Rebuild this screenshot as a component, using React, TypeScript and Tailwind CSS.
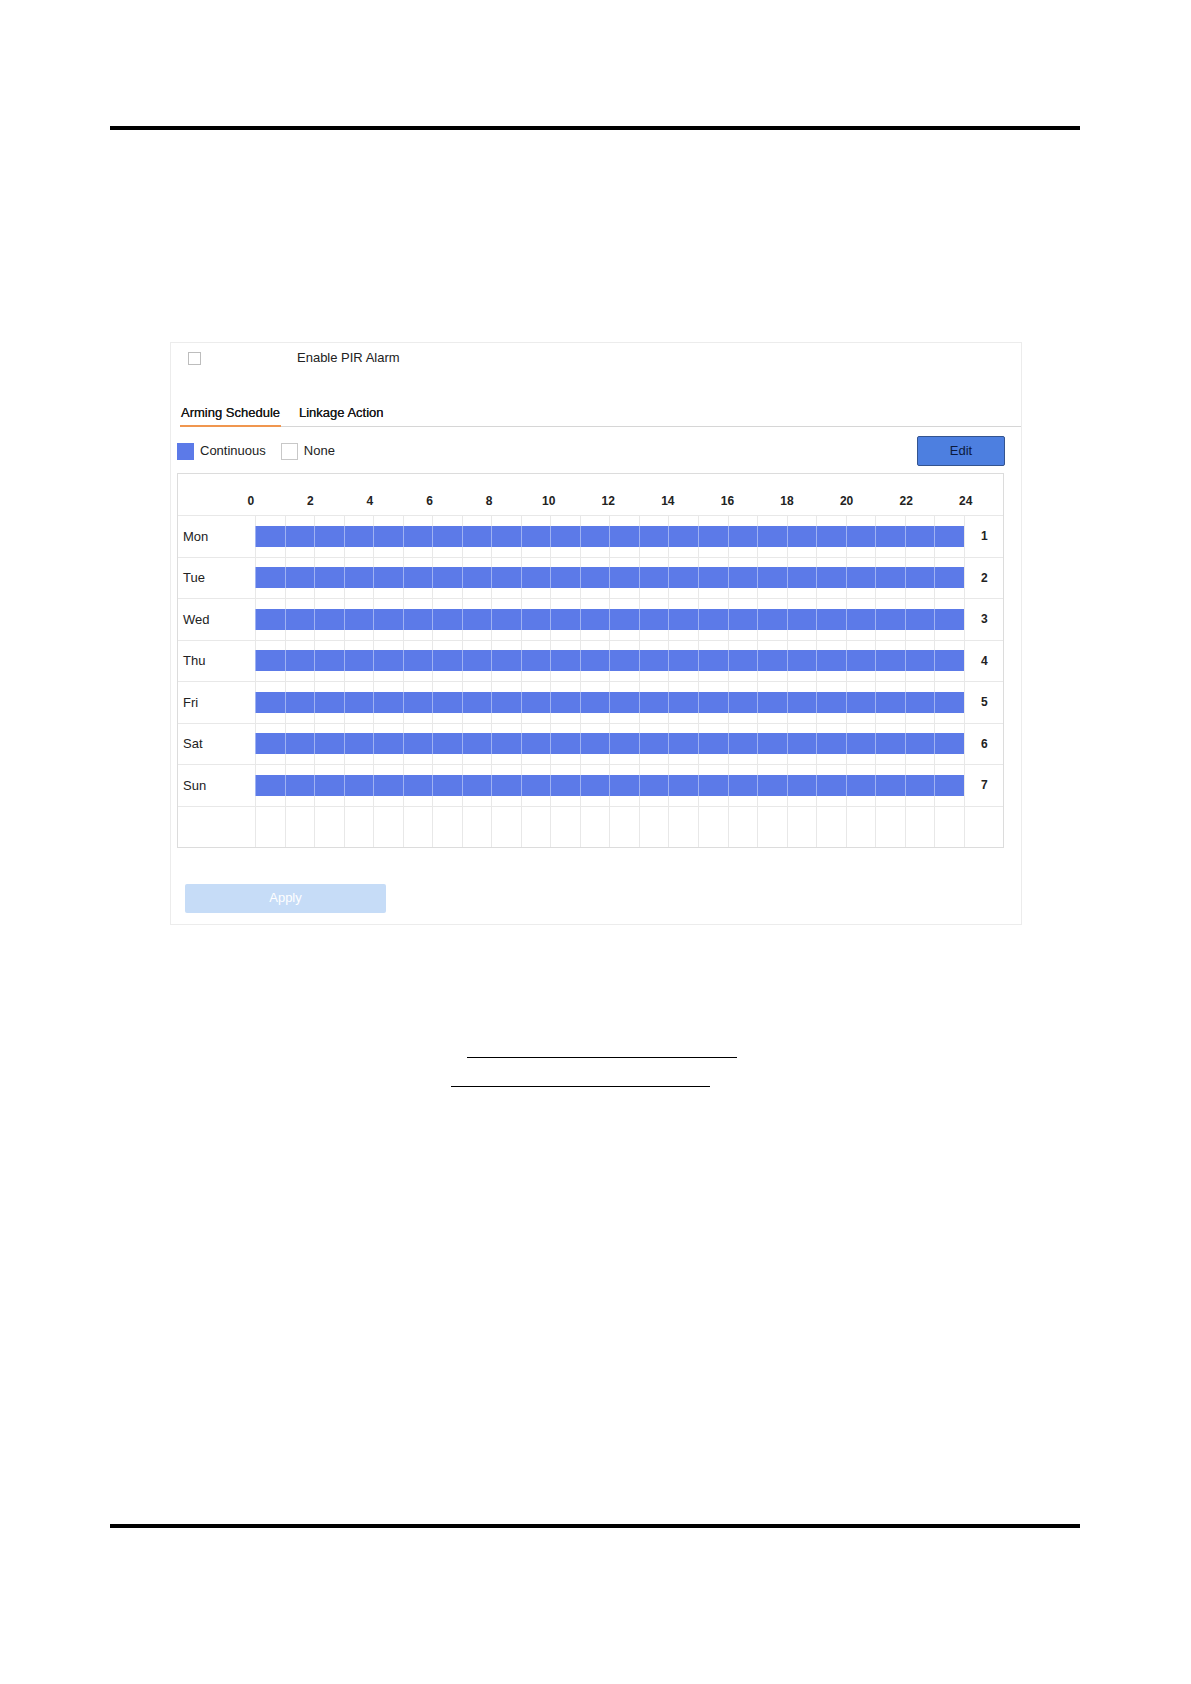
import React from "react";

const days = ["Mon", "Tue", "Wed", "Thu", "Fri", "Sat", "Sun"];
const hours = [0, 2, 4, 6, 8, 10, 12, 14, 16, 18, 20, 22, 24];
const cells = Array.from({ length: 24 }, (_, i) => i);

function DayRow({ label, n }: { label: string; n: number }) {
  return (
    <div className="grid grid-cols-[77px_repeat(24,29.54px)_40px] h-[41.5px] border-t border-[#e8e8e8]">
      <div className="flex items-center pl-[5px] text-[13px] text-[#222]">{label}</div>
      {cells.map((c) => (
        <div key={c} className="flex items-center border-l border-[#e8e8e8]">
          <div className="-ml-px h-[21px] w-[calc(100%+1px)] bg-[#5c7ae8] border-l border-[#9fb2f2]" />
        </div>
      ))}
      <div className="flex items-center justify-center border-l border-[#e8e8e8] text-[12px] font-bold text-[#222]">
        {n}
      </div>
    </div>
  );
}

export default function App() {
  return (
    <div
      className="w-[1191px] h-[1684px] bg-white pt-[126px]"
      style={{ fontFamily: '"Liberation Sans", Arial, sans-serif' }}
    >
      <div className="ml-[110px] w-[970px] h-[4px] bg-black" />

      <div className="ml-[170px] mt-[212px] w-[852px] border border-[#ececec] bg-white">
        {/* Enable row */}
        <div className="mt-[7px] h-[16px] flex items-center">
          <div className="ml-[17px] w-[13px] h-[13px] border border-[#bdbdbd] bg-white" />
          <span className="ml-[96px] text-[13px] text-[#222]">Enable PIR Alarm</span>
        </div>

        {/* Tabs */}
        <div className="mt-[39px] ml-[9px] flex border-b border-[#d6d6d6]">
          <div className="px-[1px] pb-[4px] border-b-2 border-[#f0964f] -mb-px">
            <span className="block leading-[16px] text-[13px] text-[#1a1a1a] [text-shadow:0_0_0.3px_#222]">
              Arming Schedule
            </span>
          </div>
          <div className="ml-[18px] pb-[5px]">
            <span className="block leading-[16px] text-[13px] text-[#1a1a1a] [text-shadow:0_0_0.3px_#222]">
              Linkage Action
            </span>
          </div>
        </div>

        {/* Legend + Edit */}
        <div className="h-[46px] pt-[2px] flex items-center justify-between pl-[6px] pr-[16px]">
          <div className="flex items-center">
            <div className="w-[17px] h-[17px] bg-[#5c7ae8]" />
            <span className="ml-[6px] text-[13px] text-[#222]">Continuous</span>
            <div className="ml-[15px] w-[17px] h-[17px] border border-[#c8c8c8] bg-white" />
            <span className="ml-[6px] text-[13px] text-[#222]">None</span>
          </div>
          <button className="w-[88px] h-[30px] bg-[#4d7fe0] border border-[#34548f] rounded-[2px] text-[13px] text-[#0b1a3d]">
            Edit
          </button>
        </div>

        {/* Schedule grid */}
        <div className="ml-[6px] w-[827px] border border-[#dcdcdc]">
          <div className="h-[41px] flex pl-[43px] pt-[19px]">
            {hours.map((h) => (
              <div key={h} className="w-[59.58px] text-center leading-[16px] text-[12px] font-bold text-[#222]">
                {h}
              </div>
            ))}
          </div>
          {days.map((d, i) => (
            <DayRow key={d} label={d} n={i + 1} />
          ))}
          <div className="grid grid-cols-[77px_repeat(24,29.54px)_40px] h-[41px] border-t border-[#e8e8e8]">
            <div />
            {cells.map((c) => (
              <div key={c} className="border-l border-[#e8e8e8]" />
            ))}
            <div className="border-l border-[#e8e8e8]" />
          </div>
        </div>

        {/* Apply */}
        <div className="mt-[36px] ml-[14px] pb-[11px]">
          <button className="w-[201px] h-[29px] bg-[#c6dcf7] rounded-[2px] text-[13px] text-white">
            Apply
          </button>
        </div>
      </div>

      <div className="mt-[132px] ml-[467px] w-[270px] h-[1.5px] bg-black" />
      <div className="mt-[27.5px] ml-[451px] w-[259px] h-[1.5px] bg-black" />

      <div className="mt-[437px] ml-[110px] w-[970px] h-[4px] bg-black" />
    </div>
  );
}
